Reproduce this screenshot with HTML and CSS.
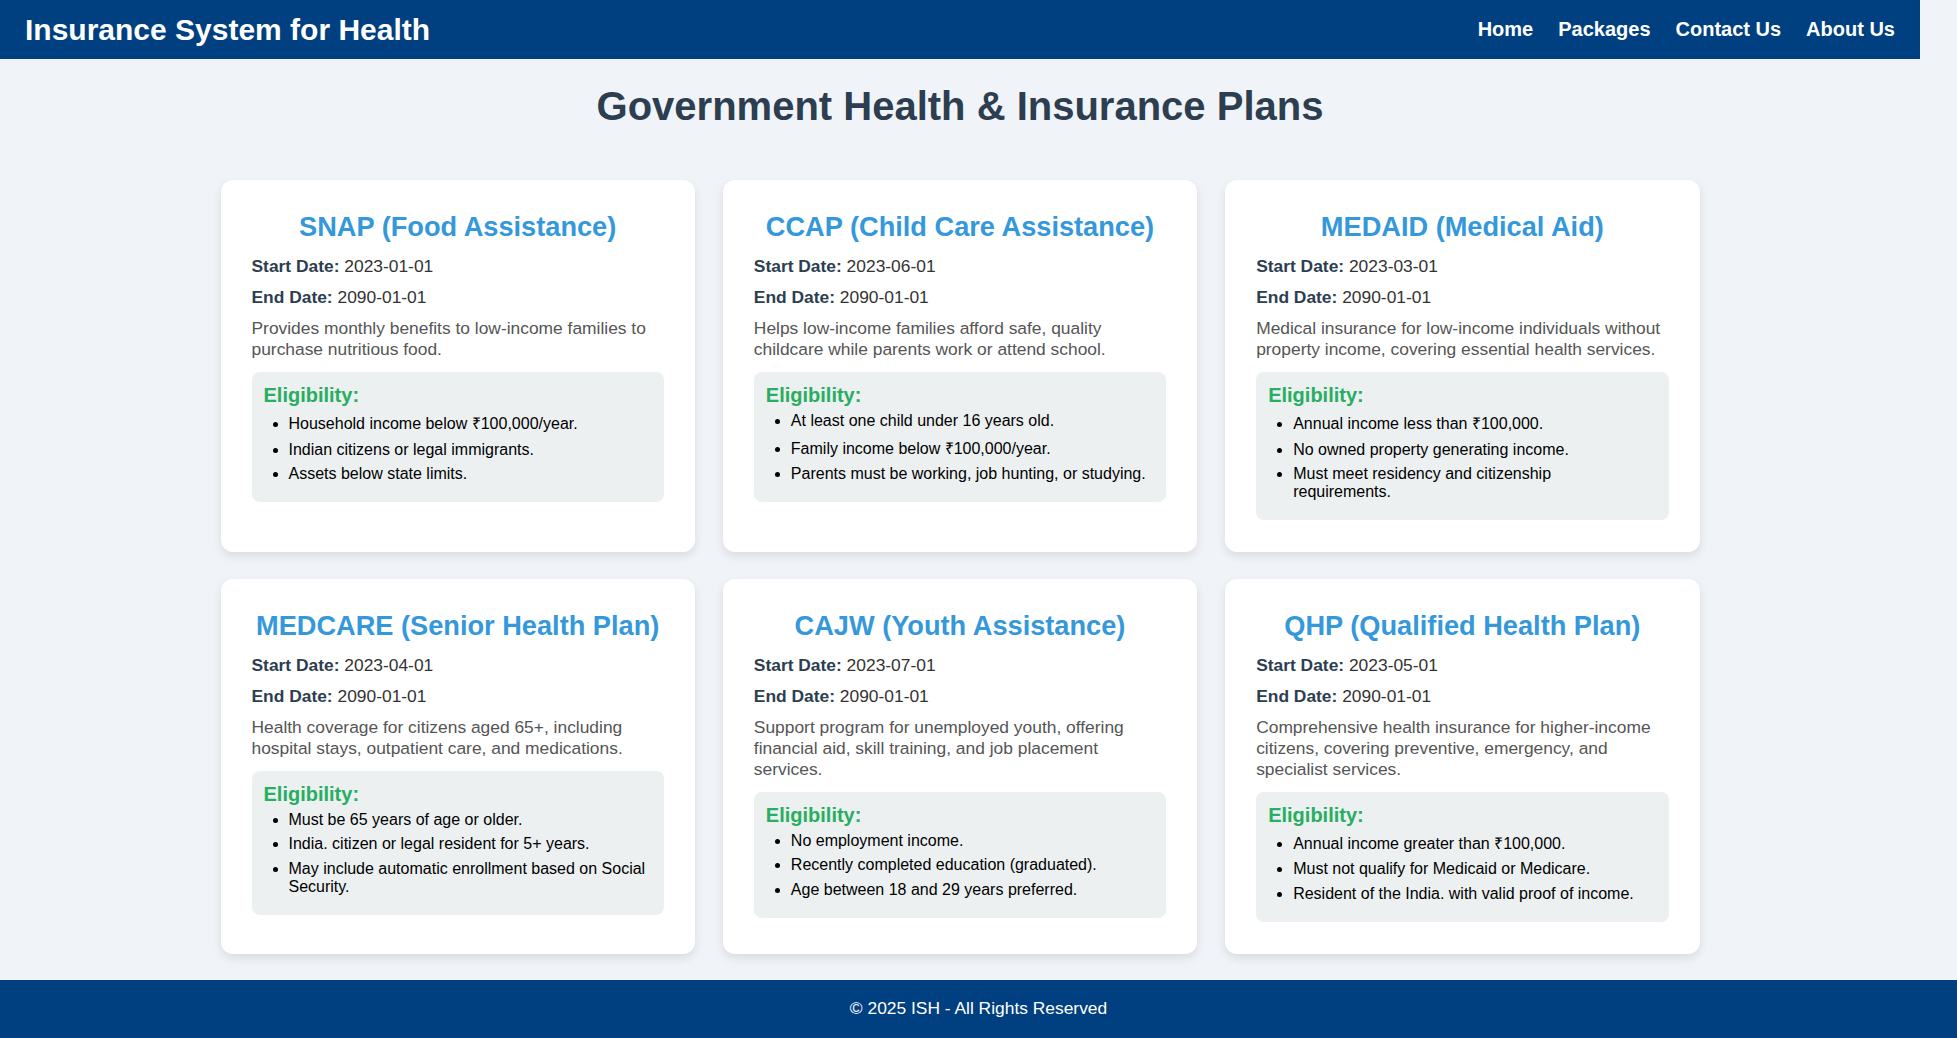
FILE: index.html
```html
<!DOCTYPE html>
<html lang="en">
<head>
<meta charset="UTF-8">
<title>Insurance System for Health</title>
<link rel="stylesheet" href="styles.css">
</head>
<body>
<div class="page">
  <header class="topbar">
    <div class="brand">Insurance System for Health</div>
    <nav class="nav">
      <a href="#">Home</a>
      <a href="#">Packages</a>
      <a href="#">Contact Us</a>
      <a href="#">About Us</a>
    </nav>
  </header>
  <main class="main">
    <h1 class="page-title">Government Health &amp; Insurance Plans</h1>
    <section class="plans">
      <article class="card">
        <h2 class="card-title">SNAP (Food Assistance)</h2>
        <p class="meta"><strong>Start Date:</strong> 2023-01-01</p>
        <p class="meta"><strong>End Date:</strong> 2090-01-01</p>
        <p class="desc">Provides monthly benefits to low-income families to purchase nutritious food.</p>
        <div class="elig">
          <h3 class="elig-title">Eligibility:</h3>
          <ul class="elig-list">
            <li>Household income below ₹100,000/year.</li>
            <li>Indian citizens or legal immigrants.</li>
            <li>Assets below state limits.</li>
          </ul>
        </div>
      </article>
      <article class="card">
        <h2 class="card-title">CCAP (Child Care Assistance)</h2>
        <p class="meta"><strong>Start Date:</strong> 2023-06-01</p>
        <p class="meta"><strong>End Date:</strong> 2090-01-01</p>
        <p class="desc">Helps low-income families afford safe, quality childcare while parents work or attend school.</p>
        <div class="elig">
          <h3 class="elig-title">Eligibility:</h3>
          <ul class="elig-list">
            <li>At least one child under 16 years old.</li>
            <li>Family income below ₹100,000/year.</li>
            <li>Parents must be working, job hunting, or studying.</li>
          </ul>
        </div>
      </article>
      <article class="card">
        <h2 class="card-title">MEDAID (Medical Aid)</h2>
        <p class="meta"><strong>Start Date:</strong> 2023-03-01</p>
        <p class="meta"><strong>End Date:</strong> 2090-01-01</p>
        <p class="desc">Medical insurance for low-income individuals without property income, covering essential health services.</p>
        <div class="elig">
          <h3 class="elig-title">Eligibility:</h3>
          <ul class="elig-list">
            <li>Annual income less than ₹100,000.</li>
            <li>No owned property generating income.</li>
            <li>Must meet residency and citizenship requirements.</li>
          </ul>
        </div>
      </article>
      <article class="card">
        <h2 class="card-title">MEDCARE (Senior Health Plan)</h2>
        <p class="meta"><strong>Start Date:</strong> 2023-04-01</p>
        <p class="meta"><strong>End Date:</strong> 2090-01-01</p>
        <p class="desc">Health coverage for citizens aged 65+, including hospital stays, outpatient care, and medications.</p>
        <div class="elig">
          <h3 class="elig-title">Eligibility:</h3>
          <ul class="elig-list">
            <li>Must be 65 years of age or older.</li>
            <li>India. citizen or legal resident for 5+ years.</li>
            <li>May include automatic enrollment based on Social Security.</li>
          </ul>
        </div>
      </article>
      <article class="card">
        <h2 class="card-title">CAJW (Youth Assistance)</h2>
        <p class="meta"><strong>Start Date:</strong> 2023-07-01</p>
        <p class="meta"><strong>End Date:</strong> 2090-01-01</p>
        <p class="desc">Support program for unemployed youth, offering financial aid, skill training, and job placement services.</p>
        <div class="elig">
          <h3 class="elig-title">Eligibility:</h3>
          <ul class="elig-list">
            <li>No employment income.</li>
            <li>Recently completed education (graduated).</li>
            <li>Age between 18 and 29 years preferred.</li>
          </ul>
        </div>
      </article>
      <article class="card">
        <h2 class="card-title">QHP (Qualified Health Plan)</h2>
        <p class="meta"><strong>Start Date:</strong> 2023-05-01</p>
        <p class="meta"><strong>End Date:</strong> 2090-01-01</p>
        <p class="desc">Comprehensive health insurance for higher-income citizens, covering preventive, emergency, and specialist services.</p>
        <div class="elig">
          <h3 class="elig-title">Eligibility:</h3>
          <ul class="elig-list">
            <li>Annual income greater than ₹100,000.</li>
            <li>Must not qualify for Medicaid or Medicare.</li>
            <li>Resident of the India. with valid proof of income.</li>
          </ul>
        </div>
      </article>
    </section>
  </main>
</div>
<footer class="footer">© 2025 ISH - All Rights Reserved</footer>
</body>
</html>
```
FILE: styles.css
```css
* { box-sizing: border-box; }

body {
  margin: 0;
  background: #f0f4f8;
  font-family: "Liberation Sans", Arial, sans-serif;
  color: #333;
}

.page {
  width: 1920px;
}

.topbar {
  height: 59px;
  background: #004080;
  color: #fff;
  display: flex;
  align-items: center;
  justify-content: space-between;
  padding: 0 25px 0 25px;
}

.brand {
  font-size: 30px;
  font-weight: bold;
}

.nav {
  display: flex;
  gap: 25px;
}

.nav a {
  color: #fff;
  text-decoration: none;
  font-weight: bold;
  font-size: 20px;
}

.main {
  padding-bottom: 26px;
}

.page-title {
  margin: 24px 0 51px;
  text-align: center;
  font-size: 40px;
  line-height: 46px;
  color: #2c3e50;
}

.plans {
  width: 1479px;
  margin: 0 auto;
  display: grid;
  grid-template-columns: repeat(3, 1fr);
  column-gap: 28px;
  row-gap: 27px;
}

.card {
  background: #fff;
  border-radius: 12px;
  box-shadow: 0 4px 10px rgba(0, 0, 0, 0.1);
  padding: 31px 31px 32px;
}

.card-title {
  margin: 0 0 14px;
  text-align: center;
  font-size: 27.2px;
  line-height: 31px;
  color: #3498db;
}

.meta,
.desc {
  font-size: 17.4px;
  line-height: 21px;
  margin: 10px 0;
}

.meta {
  color: #333;
}

.meta strong {
  color: #2c3e50;
}

.desc {
  color: #555;
  margin-bottom: 12px;
}

.elig {
  background: #ecf0f1;
  border-radius: 8px;
  padding: 12px 17px 12px 12px;
}

.elig-title {
  margin: 0 0 5px;
  font-size: 20px;
  line-height: 23px;
  color: #27ae60;
}

.elig-list {
  margin: 0;
  padding-left: 25px;
  color: #000;
  font-size: 16px;
}

.elig-list li {
  margin-bottom: 6.6px;
}

.footer {
  height: 58px;
  background: #004080;
  color: #fff;
  font-size: 17.4px;
  display: flex;
  align-items: center;
  justify-content: center;
}
```
